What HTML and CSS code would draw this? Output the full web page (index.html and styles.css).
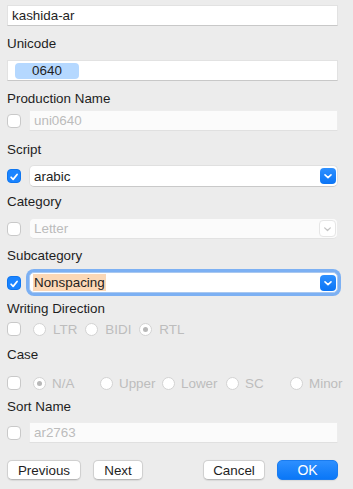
FILE: index.html
```html
<!DOCTYPE html>
<html>
<head>
<meta charset="utf-8">
<link rel="stylesheet" href="styles.css">
</head>
<body>
<div class="panel">
  <div class="field f-name"><span>kashida-ar</span></div>

  <div class="label l-unicode">Unicode</div>
  <div class="field f-unicode"><span class="token">0640</span></div>

  <div class="label l-prod">Production Name</div>
  <div class="row r-prod">
    <span class="cb"></span>
    <div class="field disabled grow"><span class="ph">uni0640</span></div>
  </div>

  <div class="label l-script">Script</div>
  <div class="row r-script">
    <span class="cb checked"><svg viewBox="0 0 14 14" width="14" height="14"><path d="M3.6 7.3 L6 9.8 L10.6 4" fill="none" stroke="#fff" stroke-width="2" stroke-linecap="round" stroke-linejoin="round"/></svg></span>
    <div class="popup grow"><span>arabic</span><span class="pbtn"><svg viewBox="0 0 16 16" width="16" height="16"><path d="M5 6.8 L8 9.6 L11 6.8" fill="none" stroke="#fff" stroke-width="1.6" stroke-linecap="round" stroke-linejoin="round"/></svg></span></div>
  </div>

  <div class="label l-cat">Category</div>
  <div class="row r-cat">
    <span class="cb"></span>
    <div class="popup disabled grow"><span class="ph">Letter</span><span class="pbtn off"><svg viewBox="0 0 16 16" width="16" height="16"><path d="M5 6.8 L8 9.6 L11 6.8" fill="none" stroke="#c4c4c4" stroke-width="1.4" stroke-linecap="round" stroke-linejoin="round"/></svg></span></div>
  </div>

  <div class="label l-sub">Subcategory</div>
  <div class="row r-sub">
    <span class="cb checked"><svg viewBox="0 0 14 14" width="14" height="14"><path d="M3.6 7.3 L6 9.8 L10.6 4" fill="none" stroke="#fff" stroke-width="2" stroke-linecap="round" stroke-linejoin="round"/></svg></span>
    <div class="popup focus grow"><span class="sel">Nonspacing</span><span class="pbtn"><svg viewBox="0 0 16 16" width="16" height="16"><path d="M5 6.8 L8 9.6 L11 6.8" fill="none" stroke="#fff" stroke-width="1.6" stroke-linecap="round" stroke-linejoin="round"/></svg></span></div>
  </div>

  <div class="label l-dir">Writing Direction</div>
  <div class="row r-dir">
    <span class="cb"></span>
    <div class="radios dir">
      <span class="radio"><span class="rc"></span>LTR</span>
      <span class="radio"><span class="rc"></span>BIDI</span>
      <span class="radio"><span class="rc on"></span>RTL</span>
    </div>
  </div>

  <div class="label l-case">Case</div>
  <div class="row r-case">
    <span class="cb"></span>
    <div class="radios case">
      <span class="radio"><span class="rc on"></span>N/A</span>
      <span class="radio"><span class="rc"></span>Upper</span>
      <span class="radio"><span class="rc"></span>Lower</span>
      <span class="radio"><span class="rc"></span>SC</span>
      <span class="radio"><span class="rc"></span>Minor</span>
    </div>
  </div>

  <div class="label l-sort">Sort Name</div>
  <div class="row r-sort">
    <span class="cb"></span>
    <div class="field disabled grow"><span class="ph">ar2763</span></div>
  </div>

  <div class="buttons">
    <button class="btn b-prev">Previous</button>
    <button class="btn b-next">Next</button>
    <span class="spacer"></span>
    <button class="btn b-cancel">Cancel</button>
    <button class="btn primary b-ok">OK</button>
  </div>
</div>
</body>
</html>
```
FILE: styles.css
```css
html, body {
  margin: 0;
  padding: 0;
  background: #ececec;
}
body {
  font-family: "Liberation Sans", Arial, sans-serif;
  font-size: 13.4px;
  color: #1e1e1e;
  width: 353px;
  height: 489px;
  overflow: hidden;
}
.panel {
  padding: 5px 15px 0 7px;
  display: flex;
  flex-direction: column;
}
.label {
  height: 16px;
  line-height: 16px;
  color: #1e1e1e;
}
.field {
  height: 21px;
  box-sizing: border-box;
  background: #fff;
  border: 1px solid #e2e2e2;
  border-bottom-color: #c8c8c8;
  display: flex;
  align-items: center;
  padding-left: 4px;
}
.field.disabled {
  background: #fbfbfb;
  border-color: #ededed;
  border-bottom-color: #e0e0e0;
}
.ph { color: #bcbcbc; }
.f-unicode { margin-top: 8px; padding-left: 7px; }
.token {
  display: inline-block;
  width: 64px;
  height: 16px;
  line-height: 16px;
  border-radius: 4px;
  background: #b5d8ff;
  text-align: center;
  margin-top: 1px;
}
.row {
  display: flex;
  align-items: center;
  gap: 8px;
}
.grow { flex: 1; }
.cb {
  width: 14px;
  height: 14px;
  box-sizing: border-box;
  border: 1px solid #c9c9c9;
  border-radius: 4px;
  background: #fff;
  flex: none;
  display: flex;
}
.cb.checked {
  background: #1a84ff;
  border-color: #0f76f0;
}
.popup {
  height: 22px;
  box-sizing: border-box;
  background: #fff;
  border: 1px solid #e0e0e0;
  border-bottom-color: #c9c9c9;
  border-radius: 5px;
  display: flex;
  align-items: center;
  justify-content: space-between;
  padding: 0 1px 0 4px;
}
.popup.disabled {
  height: 21px;
  background: #fbfbfb;
  border-color: #ececec;
  border-bottom-color: #e2e2e2;
}
.pbtn {
  width: 16px;
  height: 16px;
  border-radius: 4px;
  background: linear-gradient(#2e90ff, #0a74f5);
  display: flex;
}
.pbtn.off {
  background: #fff;
  box-sizing: border-box;
  border: 1px solid #e6e6e6;
  width: 17px;
  height: 17px;
}
.popup.focus {
  height: 21px;
  box-shadow: 0 0 0 3px #7cb0f3;
  border-color: #a9c8f0;
}
.sel {
  background: #fcd8b6;
  padding: 1px 1px;
  line-height: 15px;
  margin-left: -1px;
}
.radios {
  display: flex;
  align-items: center;
  color: #bdbdbd;
  margin-left: 4px;
}
.radio {
  display: inline-flex;
  align-items: center;
  gap: 7px;
}
.dir .radio { margin-right: 8px; }
.case { display: grid; grid-template-columns: 67px 62px 64px 64px auto; }
.case .radio { gap: 6px; }
.rc {
  width: 13px;
  height: 13px;
  box-sizing: border-box;
  border: 1px solid #d3d3d3;
  border-radius: 50%;
  background: #fff;
  display: flex;
  align-items: center;
  justify-content: center;
}
.rc.on::after {
  content: "";
  width: 5px;
  height: 5px;
  border-radius: 50%;
  background: #b8b8b8;
}

.l-unicode { margin-top: 10px; }
.l-prod { margin-top: 10px; }
.r-prod { margin-top: 3px; }
.l-script { margin-top: 11px; }
.r-script { margin-top: 7px; }
.l-cat { margin-top: 7px; }
.r-cat { margin-top: 8px; }
.l-sub { margin-top: 9px; }
.r-sub { margin-top: 8px; }
.l-dir { margin-top: 8px; }
.r-dir { margin-top: 4px; height: 16px; }
.l-case { margin-top: 10px; }
.r-case { margin-top: 12px; height: 16px; }
.l-sort { margin-top: 8px; }
.r-sort { margin-top: 7px; }

.buttons {
  margin-top: 17px;
  display: flex;
  align-items: center;
  gap: 12px;
}
.spacer { flex: 1; }
.btn {
  font-family: "Liberation Sans", Arial, sans-serif;
  font-size: 13.4px;
  color: #1e1e1e;
  height: 20px;
  padding: 0;
  background: #fff;
  border: 0.5px solid #d0d0d0;
  border-bottom-color: #b8b8b8;
  border-radius: 5px;
  box-shadow: 0 0.5px 1px rgba(0,0,0,0.08);
}
.b-prev { width: 74px; }
.b-next { width: 50px; }
.b-cancel { width: 62px; }
.b-ok { width: 61px; }
.btn.primary {
  background: linear-gradient(#2d8fff, #0a77f7);
  border-color: #1a7cf0;
  color: #fff;
  font-size: 14px;
}
```
